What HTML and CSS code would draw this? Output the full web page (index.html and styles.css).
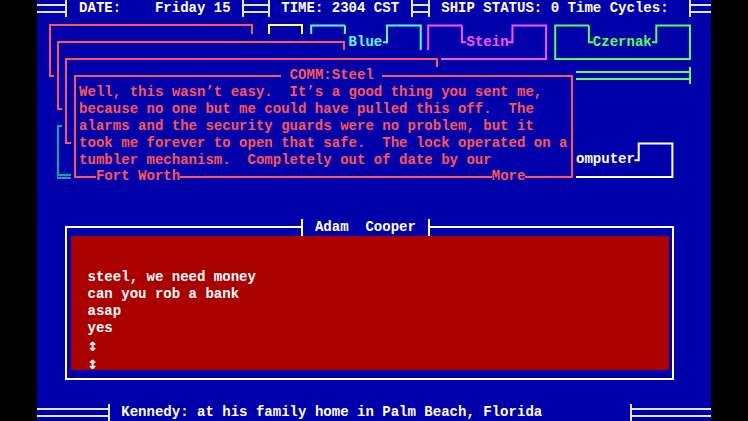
FILE: index.html
```html
<!DOCTYPE html>
<html lang="en">
<head>
<meta charset="utf-8">
<title>Steel — COMM</title>
<link rel="stylesheet" href="styles.css">
</head>
<body>
<main class="screen">
  <header class="bar bar-top">
    <span class="seg seg-r top-a"></span>
    <span class="txt top-date"> DATE:    Friday 15 </span>
    <span class="seg seg-l seg-r top-b"></span>
    <span class="txt top-time"> TIME: 2304 CST </span>
    <span class="seg seg-l seg-r top-c"></span>
    <span class="txt top-ship"> SHIP STATUS: 0 Time Cycles:  </span>
    <span class="seg seg-l top-d"></span>
  </header>

  <section class="win w-yellow"><div class="frame"></div></section>

  <section class="win w-blue">
    <svg class="tab" viewBox="0 0 14 3" preserveAspectRatio="none" aria-hidden="true"><path d="M4.5 0.5H0.5V2.5H13.5V0.5H9.5V1.5H9M4.5 0.5V1.5H5" vector-effect="non-scaling-stroke"/></svg>
    <span class="tab-title">Blue</span>
  </section>

  <section class="win w-stein">
    <svg class="tab" viewBox="0 0 15 3" preserveAspectRatio="none" aria-hidden="true"><path d="M4.5 0.5H0.5V2.5H14.5V0.5H10.5V1.5H10M4.5 0.5V1.5H5" vector-effect="non-scaling-stroke"/></svg>
    <span class="tab-title">Stein</span>
  </section>

  <section class="win w-czernak">
    <svg class="tab" viewBox="0 0 17 3" preserveAspectRatio="none" aria-hidden="true"><path d="M4.5 0.5H0.5V2.5H16.5V0.5H12.5V1.5H12M4.5 0.5V1.5H5" vector-effect="non-scaling-stroke"/></svg>
    <span class="tab-title">Czernak</span>
  </section>

  <section class="win w-box1"><div class="frame"></div></section>
  <section class="win w-box2"><div class="frame"></div></section>
  <section class="win w-teal"><div class="frame frame-dbl-b"></div></section>
  <section class="win w-box3"><div class="frame"></div></section>

  <div class="seg seg-r gline"></div>

  <section class="win w-computer">
    <svg class="tab" viewBox="0 0 18 3" preserveAspectRatio="none" aria-hidden="true"><path d="M4.5 0.5H0.5V2.5H17.5V0.5H13.5V1.5H13M4.5 0.5V1.5H5" vector-effect="non-scaling-stroke"/></svg>
    <span class="tab-title">Computer</span>
  </section>

  <section class="win w-comm">
    <div class="frame"></div>
    <h2 class="comm-title"> COMM:Steel </h2>
    <p class="comm-body">Well, this wasn’t easy.  It’s a good thing you sent me,
because no one but me could have pulled this off.  The
alarms and the security guards were no problem, but it
took me forever to open that safe.  The lock operated on a
tumbler mechanism.  Completely out of date by our</p>
    <span class="comm-from">Fort Worth</span>
    <span class="comm-more">More</span>
  </section>

  <section class="win w-adam">
    <div class="frame"></div>
    <h2 class="adam-title">Adam  Cooper</h2>
    <div class="adam-panel">steel, we need money
can you rob a bank
asap
yes
<span class="arrow">↕</span>
<span class="arrow">↕</span></div>
  </section>

  <footer class="bar bar-bottom">
    <span class="seg seg-r bot-a"></span>
    <span class="txt bot-text"> Kennedy: at his family home in Palm Beach, Florida</span>
    <span class="seg seg-l bot-b"></span>
  </footer>
</main>
</body>
</html>
```

FILE: styles.css
```css
:root {
  --cw: 8.425px;
  --ch: 16.84px;
  --hx: calc(var(--cw) / 2 - 1px);
  --hy: calc(var(--ch) / 2 - 1px);
  --blue: #0000aa;
  --red: #aa0000;
  --lred: #ff5555;
}

* { box-sizing: border-box; }

html, body {
  margin: 0;
  padding: 0;
  background: #000;
}

body {
  display: flex;
  justify-content: center;
  height: 421px;
  overflow: hidden;
}

.screen {
  width: 674px;
  height: 421px;
  display: grid;
  grid-template-columns: repeat(80, var(--cw));
  grid-template-rows: repeat(25, var(--ch));
  background: var(--blue);
  font-family: "Liberation Mono", "DejaVu Sans Mono", monospace;
  font-weight: bold;
  font-size: 14.04px;
  line-height: var(--ch);
  color: #fff;
  overflow: hidden;
}

/* status bars */
.bar {
  grid-column: 1 / -1;
  display: grid;
  grid-template-columns: repeat(80, var(--cw));
  grid-template-rows: var(--ch);
}
.bar-top { grid-row: 1; }
.bar-bottom { grid-row: 25; }

.txt { white-space: pre; color: #fff; }

.seg {
  display: flex;
  align-items: center;
  color: #e4e4ff;
}
.seg::before {
  content: "";
  flex: 1;
  height: 5px;
  border-top: 2px solid currentColor;
  border-bottom: 2px solid currentColor;
}
.seg-r { margin-right: var(--hx); border-right: 2px solid currentColor; }
.seg-l { margin-left: var(--hx); border-left: 2px solid currentColor; }

.top-a { grid-column: 1 / 5; }
.top-date { grid-column: 5 / 25; }
.top-b { grid-column: 25 / 29; }
.top-time { grid-column: 29 / 45; }
.top-c { grid-column: 45 / 48; }
.top-ship { grid-column: 48 / 78; }
.top-d { grid-column: 78 / 81; }

.bot-a { grid-column: 1 / 10; }
.bot-text { grid-column: 10 / 71; }
.bot-b { grid-column: 71 / 81; }

.gline {
  grid-area: 5 / 65 / 6 / 79;
  color: #55ff55;
}

/* windows */
.win {
  display: grid;
  grid-template-columns: repeat(var(--n), var(--cw));
  grid-template-rows: repeat(var(--m), var(--ch));
  background: var(--blue);
}

.frame {
  grid-area: 1 / 1 / -1 / -1;
  margin: var(--hy) var(--hx);
  border: 2px solid currentColor;
}
.frame-dbl-b {
  border-bottom: 5px double currentColor;
  margin-bottom: calc(var(--ch) / 2 - 2.5px);
}

.tab {
  grid-area: 1 / 1 / -1 / -1;
  display: block;
  width: 100%;
  height: 100%;
}
.tab path {
  fill: none;
  stroke: currentColor;
  stroke-width: 2px;
  vector-effect: non-scaling-stroke;
}
.tab-title {
  grid-row: 2;
  grid-column: 6 / -6;
  white-space: pre;
}

.w-yellow { grid-area: 2 / 28 / 5 / 33; --n: 5; --m: 3; color: #ffff55; }
.w-blue { grid-area: 2 / 33 / 5 / 47; --n: 14; --m: 3; color: #55ffff; }
.w-stein { grid-area: 2 / 47 / 5 / 62; --n: 15; --m: 3; color: #ff55ff; }
.w-czernak { grid-area: 2 / 62 / 5 / 79; --n: 17; --m: 3; color: #55ff55; }
.w-box1 { grid-area: 2 / 2 / 6 / 27; --n: 25; --m: 4; color: var(--lred); }
.w-box2 { grid-area: 3 / 3 / 8 / 38; --n: 35; --m: 5; color: var(--lred); }
.w-teal { grid-area: 8 / 3 / 12 / 52; --n: 49; --m: 4; color: #00aaaa; }
.w-box3 { grid-area: 4 / 4 / 10 / 49; --n: 45; --m: 6; color: var(--lred); }
.w-computer { grid-area: 9 / 59 / 12 / 77; --n: 18; --m: 3; color: #fff; }
.w-comm { grid-area: 5 / 5 / 12 / 65; --n: 60; --m: 7; color: var(--lred); }
.w-adam { grid-area: 14 / 4 / 24 / 77; --n: 73; --m: 10; color: #fff; }

/* COMM window */
.comm-title,
.comm-from,
.comm-more {
  margin: 0;
  font: inherit;
  white-space: pre;
  background: var(--blue);
}
.comm-title { grid-row: 1; grid-column: 26 / 38; }
.comm-from { grid-row: 7; grid-column: 4 / 14; }
.comm-more { grid-row: 7; grid-column: 51 / 55; }
.comm-body {
  grid-row: 2 / 7;
  grid-column: 2 / 60;
  margin: 0;
  white-space: pre;
}

/* Adam Cooper window */
.adam-title {
  grid-row: 1;
  grid-column: 29 / 45;
  margin: 0 var(--hx);
  padding-left: calc(var(--cw) * 1.5 - 1px);
  border-left: 2px solid currentColor;
  border-right: 2px solid currentColor;
  background: var(--blue);
  font: inherit;
  white-space: pre;
}
.adam-panel {
  grid-row: 2 / 10;
  grid-column: 2 / 73;
  background: var(--red);
  padding: calc(var(--ch) * 2) 0 0 calc(var(--cw) * 2);
  white-space: pre;
  color: #fff;
}
.arrow {
  font-family: "DejaVu Sans Mono", monospace;
  font-size: 17px;
  line-height: 1;
}
```
